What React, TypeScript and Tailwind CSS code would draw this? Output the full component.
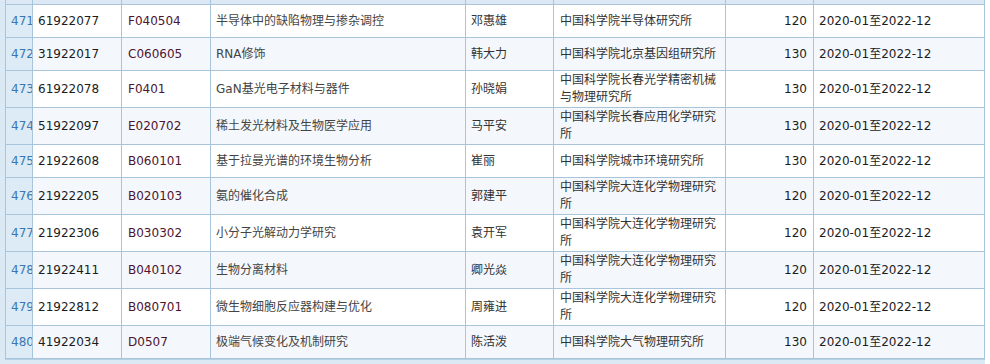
import React from 'react';

type Row = {
  no: number;
  id: string;
  code: string;
  title: string;
  person: string;
  org: string;
  amount: number;
};

const rows: Row[] = [
  { no: 471, id: '61922077', code: 'F040504', title: '半导体中的缺陷物理与掺杂调控', person: '邓惠雄', org: '中国科学院半导体研究所', amount: 120 },
  { no: 472, id: '31922017', code: 'C060605', title: 'RNA修饰', person: '韩大力', org: '中国科学院北京基因组研究所', amount: 130 },
  { no: 473, id: '61922078', code: 'F0401', title: 'GaN基光电子材料与器件', person: '孙晓娟', org: '中国科学院长春光学精密机械与物理研究所', amount: 130 },
  { no: 474, id: '51922097', code: 'E020702', title: '稀土发光材料及生物医学应用', person: '马平安', org: '中国科学院长春应用化学研究所', amount: 130 },
  { no: 475, id: '21922608', code: 'B060101', title: '基于拉曼光谱的环境生物分析', person: '崔丽', org: '中国科学院城市环境研究所', amount: 130 },
  { no: 476, id: '21922205', code: 'B020103', title: '氨的催化合成', person: '郭建平', org: '中国科学院大连化学物理研究所', amount: 120 },
  { no: 477, id: '21922306', code: 'B030302', title: '小分子光解动力学研究', person: '袁开军', org: '中国科学院大连化学物理研究所', amount: 120 },
  { no: 478, id: '21922411', code: 'B040102', title: '生物分离材料', person: '卿光焱', org: '中国科学院大连化学物理研究所', amount: 120 },
  { no: 479, id: '21922812', code: 'B080701', title: '微生物细胞反应器构建与优化', person: '周雍进', org: '中国科学院大连化学物理研究所', amount: 120 },
  { no: 480, id: '41922034', code: 'D0507', title: '极端气候变化及机制研究', person: '陈活泼', org: '中国科学院大气物理研究所', amount: 130 },
];

const cell = 'flex items-center min-h-[32px] py-px px-[6px] leading-[17px]';

const App: React.FC = () => {
  return (
    <div className="w-[990px] h-[364px] overflow-hidden bg-white text-[12px] font-['DejaVu_Sans','Noto_Sans_CJK_SC',sans-serif] text-[#333]">
      <div className="w-[985px] h-full bg-[#dae9f4] pl-[5px] flex flex-col">
        <div className="grid grid-cols-[26px_88px_88px_254px_87px_171px_87px_170px] gap-px bg-[#a9c5db] px-px pb-px">
          {Array.from({ length: 8 }).map((_, i) => (
            <div key={`top-${i}`} className="h-[4px] bg-[#dce9f4]" />
          ))}
          {rows.map((r, idx) => {
            const bg = idx % 2 === 0 ? 'bg-white' : 'bg-[#f4f8fd]';
            return (
              <React.Fragment key={r.no}>
                <div className="flex items-center min-h-[32px] pl-[5px] overflow-hidden whitespace-nowrap bg-[#dcebf5] text-[#3b77b2]">
                  {r.no}
                </div>
                <div className={`${cell} ${bg} pl-[5px] text-[#1c1c1c]`}>{r.id}</div>
                <div className={`${cell} ${bg} text-[#4e1430]`}>{r.code}</div>
                <div className={`${cell} ${bg} pl-[5px] text-[#444]`}>{r.title}</div>
                <div className={`${cell} ${bg} pl-[5px]`}>{r.person}</div>
                <div className={`${cell} ${bg}`}>{r.org}</div>
                <div className={`${cell} ${bg} justify-end text-[#1c1c1c]`}>{r.amount}</div>
                <div className={`${cell} ${bg} pl-[5px] text-[#1c1c1c]`}>2020-01至2022-12</div>
              </React.Fragment>
            );
          })}
        </div>
        <div className="flex-1 border-t border-[#b6d0e4]" />
      </div>
    </div>
  );
};

export default App;
